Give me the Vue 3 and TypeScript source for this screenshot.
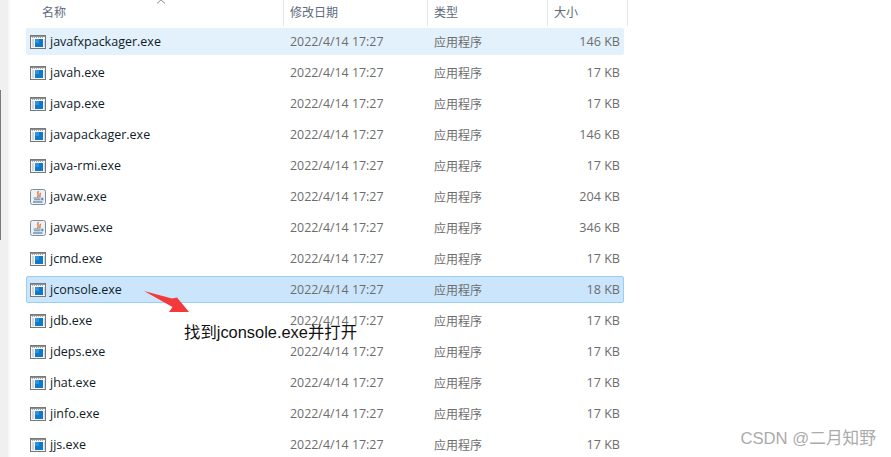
<script setup lang="ts">
interface FileRow {
  name: string;
  size: string;
  icon?: 'java';
  state?: 'hover' | 'selected';
}

const rows: FileRow[] = [
  { name: 'javafxpackager.exe', size: '146 KB', state: 'hover' },
  { name: 'javah.exe', size: '17 KB' },
  { name: 'javap.exe', size: '17 KB' },
  { name: 'javapackager.exe', size: '146 KB' },
  { name: 'java-rmi.exe', size: '17 KB' },
  { name: 'javaw.exe', size: '204 KB', icon: 'java' },
  { name: 'javaws.exe', size: '346 KB', icon: 'java' },
  { name: 'jcmd.exe', size: '17 KB' },
  { name: 'jconsole.exe', size: '18 KB', state: 'selected' },
  { name: 'jdb.exe', size: '17 KB' },
  { name: 'jdeps.exe', size: '17 KB' },
  { name: 'jhat.exe', size: '17 KB' },
  { name: 'jinfo.exe', size: '17 KB' },
  { name: 'jjs.exe', size: '17 KB' },
];
</script>

<template>
  <div class="page">
    <div class="rail"><div class="railMark"></div></div>
    <div class="explorer">
      <div class="header">
        <div class="col colName">名称</div>
        <div class="col colDate">修改日期</div>
        <div class="col colType">类型</div>
        <div class="col colSize">大小</div>
        <svg class="sort" width="10" height="5" viewBox="0 0 10 5">
          <path d="M1 4.5 L5 0.8 L9 4.5" fill="none" stroke="#8a8a8a" stroke-width="1" />
        </svg>
      </div>
      <div class="list">
        <div
          v-for="row in rows"
          :key="row.name"
          :class="['row', row.state]"
        >
          <svg v-if="row.icon === 'java'" class="icon" width="16" height="16" viewBox="0 0 16 16">
            <rect x="0.5" y="0.5" width="15" height="15" rx="2" fill="#edf1f6" stroke="#7b8da1" />
            <path d="M8.5 2 C6.2 4.5 9.8 5.5 7.4 8.2 M10.8 4 C9 5.2 10.8 6.5 9.6 8.2" fill="none" stroke="#e0702a" stroke-width="1.3" />
            <path d="M3.5 9 H10.5 M4 10.8 H10 M11 9.3 H12.8 V10.8 H10.5" fill="none" stroke="#5f86ad" stroke-width="1.1" />
            <path d="M3 13 H12.5" stroke="#4f78a0" stroke-width="1.2" />
          </svg>
          <svg v-else class="icon" width="16" height="14" viewBox="0 0 16 14">
            <rect x="0.5" y="0.5" width="15" height="13" fill="#f6f6f6" stroke="#787878" />
            <path d="M1 1.5 H15" stroke="#909090" stroke-width="1" />
            <path d="M2 2.5 H14" stroke="#a8a8a8" stroke-width="1" stroke-dasharray="1 1" />
            <path d="M2 5 H4 M2 7 H4 M2 9 H4 M2 11 H4 M14 5 H15 M14 7 H15 M14 9 H15 M14 11 H15" stroke="#b4b4b4" stroke-width="1" />
            <rect x="5" y="4" width="8" height="8" fill="#0f78c8" />
            <rect x="5" y="4" width="4" height="4" fill="#2b94dc" />
          </svg>
          <div class="cell cellName">{{ row.name }}</div>
          <div class="cell cellDate">2022/4/14 17:27</div>
          <div class="cell cellType">应用程序</div>
          <div class="cell cellSize">{{ row.size }}</div>
        </div>
      </div>
    </div>

    <svg class="arrow" width="46" height="23" viewBox="0 0 46 23">
      <path d="M0 1 L28 8.5 L33 7.5 L45 22 L25 22 L28.5 17 Z" fill="#f4393a" />
    </svg>
    <div class="note">找到jconsole.exe并打开</div>
    <div class="watermark">CSDN @二月知野</div>
  </div>
</template>

<style scoped>
.page {
  position: relative;
  width: 891px;
  height: 457px;
  display: flex;
  overflow: hidden;
  background: #ffffff;
  font-family: "Noto Sans CJK SC", "Liberation Sans", sans-serif;
}
.rail {
  width: 8px;
  height: 100%;
  background: #f0f0f0;
  border-right: 2px solid #f8f8f8;
}
.railMark {
  width: 1px;
  height: 150px;
  margin-top: 90px;
  background: #7a7a7a;
}
.explorer {
  width: 618px;
  margin-left: 16px;
}
.header {
  position: relative;
  height: 26px;
  display: grid;
  grid-template-columns: 258px 144px 120px 80px;
  margin-bottom: 2px;
  font-size: 12px;
  color: #5d6b7c;
}
.col {
  height: 26px;
  line-height: 24px;
  border-right: 1px solid #e6e6e6;
  box-sizing: border-box;
}
.colName {
  padding-left: 16px;
}
.colDate,
.colType,
.colSize {
  padding-left: 6px;
}
.sort {
  position: absolute;
  left: 130px;
  top: -1px;
}
.row {
  height: 27px;
  margin-bottom: 4px;
  width: 598px;
  display: flex;
  align-items: center;
  box-sizing: border-box;
  padding: 0 3px 0 4px;
  border: 1px solid transparent;
  border-radius: 2px;
  font-size: 12px;
  color: #6d6d6d;
}
.hover {
  background: #e3f1fc;
  border-color: #e3f1fc;
}
.selected {
  background: #cbe6fc;
  border-color: #98cff8;
}
.icon {
  flex: none;
  margin-left: -1px;
}
.cell {
  flex: none;
  white-space: nowrap;
  font-family: "Open Sans", "Noto Sans CJK SC", sans-serif;
}
.cellName {
  width: 240px;
  margin-left: 4px;
  font-size: 12.5px;
  color: #101c28;
}
.cellDate {
  width: 144px;
  font-size: 12.4px;
}
.cellType {
  width: 118px;
  font-family: "Noto Sans CJK SC", sans-serif;
}
.cellSize {
  width: 68px;
  text-align: right;
  font-size: 12.6px;
}
.arrow {
  position: absolute;
  left: 144px;
  top: 290px;
}
.note {
  position: absolute;
  left: 184px;
  top: 321px;
  font-size: 16.4px;
  line-height: 22px;
  color: #111;
  white-space: nowrap;
  font-family: "Liberation Sans", "Noto Sans CJK SC", sans-serif;
}
.watermark {
  position: absolute;
  right: 15px;
  top: 428px;
  font-size: 16.7px;
  line-height: 22px;
  color: #ababab;
  white-space: nowrap;
  font-family: "Liberation Sans", "Noto Sans CJK SC", sans-serif;
}
</style>
